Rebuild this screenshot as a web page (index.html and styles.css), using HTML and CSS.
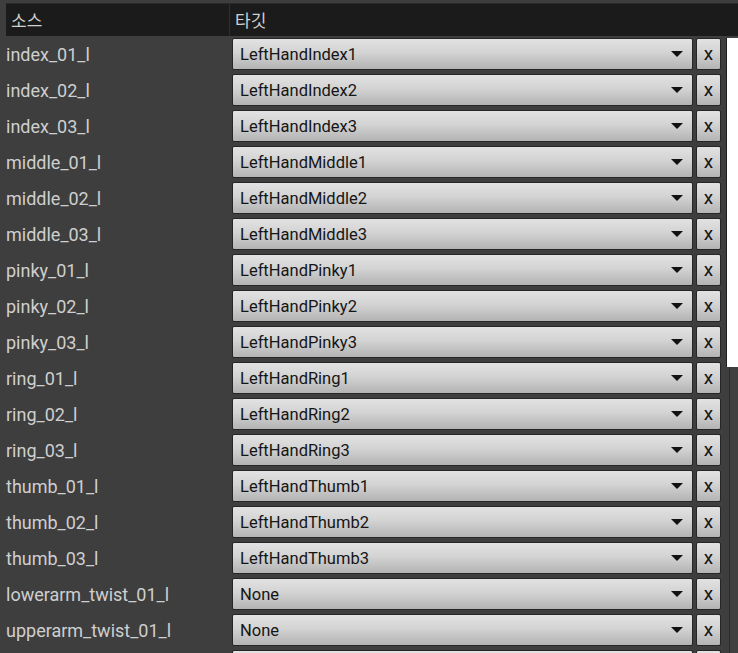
FILE: index.html
```html
<!DOCTYPE html>
<html lang="ko">
<head>
<meta charset="utf-8">
<link rel="stylesheet" href="styles.css">
</head>
<body>
<div class="header">
  <div class="hcell hsrc">소스</div>
  <div class="hcell htgt">타깃</div>
</div>
<div class="main">
  <div class="list" id="list">
    <div class="row"><div class="label">index_01_l</div><div class="combo"><span class="val">LeftHandIndex1</span><span class="arrow"></span></div><div class="xbtn">x</div></div>
    <div class="row"><div class="label">index_02_l</div><div class="combo"><span class="val">LeftHandIndex2</span><span class="arrow"></span></div><div class="xbtn">x</div></div>
    <div class="row"><div class="label">index_03_l</div><div class="combo"><span class="val">LeftHandIndex3</span><span class="arrow"></span></div><div class="xbtn">x</div></div>
    <div class="row"><div class="label">middle_01_l</div><div class="combo"><span class="val">LeftHandMiddle1</span><span class="arrow"></span></div><div class="xbtn">x</div></div>
    <div class="row"><div class="label">middle_02_l</div><div class="combo"><span class="val">LeftHandMiddle2</span><span class="arrow"></span></div><div class="xbtn">x</div></div>
    <div class="row"><div class="label">middle_03_l</div><div class="combo"><span class="val">LeftHandMiddle3</span><span class="arrow"></span></div><div class="xbtn">x</div></div>
    <div class="row"><div class="label">pinky_01_l</div><div class="combo"><span class="val">LeftHandPinky1</span><span class="arrow"></span></div><div class="xbtn">x</div></div>
    <div class="row"><div class="label">pinky_02_l</div><div class="combo"><span class="val">LeftHandPinky2</span><span class="arrow"></span></div><div class="xbtn">x</div></div>
    <div class="row"><div class="label">pinky_03_l</div><div class="combo"><span class="val">LeftHandPinky3</span><span class="arrow"></span></div><div class="xbtn">x</div></div>
    <div class="row"><div class="label">ring_01_l</div><div class="combo"><span class="val">LeftHandRing1</span><span class="arrow"></span></div><div class="xbtn">x</div></div>
    <div class="row"><div class="label">ring_02_l</div><div class="combo"><span class="val">LeftHandRing2</span><span class="arrow"></span></div><div class="xbtn">x</div></div>
    <div class="row"><div class="label">ring_03_l</div><div class="combo"><span class="val">LeftHandRing3</span><span class="arrow"></span></div><div class="xbtn">x</div></div>
    <div class="row"><div class="label">thumb_01_l</div><div class="combo"><span class="val">LeftHandThumb1</span><span class="arrow"></span></div><div class="xbtn">x</div></div>
    <div class="row"><div class="label">thumb_02_l</div><div class="combo"><span class="val">LeftHandThumb2</span><span class="arrow"></span></div><div class="xbtn">x</div></div>
    <div class="row"><div class="label">thumb_03_l</div><div class="combo"><span class="val">LeftHandThumb3</span><span class="arrow"></span></div><div class="xbtn">x</div></div>
    <div class="row"><div class="label">lowerarm_twist_01_l</div><div class="combo"><span class="val">None</span><span class="arrow"></span></div><div class="xbtn">x</div></div>
    <div class="row"><div class="label">upperarm_twist_01_l</div><div class="combo"><span class="val">None</span><span class="arrow"></span></div><div class="xbtn">x</div></div>
    <div class="row"><div class="label"></div><div class="combo"><span class="val"></span><span class="arrow"></span></div><div class="xbtn"></div></div>
  </div>
  <div class="scroll">
    <div class="thumb"></div>
    <div class="track"></div>
  </div>
</div>
</body>
</html>
```
FILE: styles.css
```css
html, body {
  margin: 0;
  padding: 0;
  height: 653px;
  overflow: hidden;
}
body {
  background: #3e3e3e;
  font-family: Roboto, "Noto Sans CJK KR", sans-serif;
}
.header {
  display: flex;
  margin: 3px 0 0 6px;
  height: 33px;
  background: #1b1b1b;
  border-top: 1px solid #2a2a2a;
  box-sizing: border-box;
}
.hcell {
  display: flex;
  align-items: center;
  color: #d0d0d0;
  font-family: "Noto Sans CJK KR", sans-serif;
  font-size: 17px;
  padding-left: 5px;
  padding-bottom: 2px;
}
.hsrc {
  width: 218px;
  border-right: 1px solid #2f2f2f;
}
.main {
  display: flex;
}
.list {
  width: 726px;
}
.row {
  display: flex;
  align-items: center;
  height: 36px;
}
.label {
  width: 227px;
  padding-left: 6px;
  box-sizing: border-box;
  color: #cfcfcf;
  font-size: 18px;
  padding-top: 1px;
}
.combo {
  margin-left: 5px;
  width: 461px;
  height: 32px;
  box-sizing: border-box;
  border: 1px solid #262626;
  border-radius: 2px;
  background: linear-gradient(#e2e2e2, #d3d3d3 45%, #b3b3b3);
  display: flex;
  align-items: center;
  padding: 0 8px 0 7px;
}
.val {
  flex: 1;
  color: #151515;
  font-size: 16.5px;
}
.arrow {
  width: 0;
  height: 0;
  border-left: 6px solid transparent;
  border-right: 6px solid transparent;
  border-top: 6px solid #111;
  margin-right: 1px;
}
.xbtn {
  margin-left: 3px;
  width: 25px;
  height: 32px;
  box-sizing: border-box;
  border: 1px solid #262626;
  border-radius: 2px;
  background: linear-gradient(#e2e2e2, #d3d3d3 45%, #b3b3b3);
  color: #111;
  font-size: 19px;
  display: flex;
  align-items: center;
  justify-content: center;
  padding-bottom: 1px;
}
.scroll {
  width: 12px;
  display: flex;
  flex-direction: column;
}
.thumb {
  margin-top: 2px;
  height: 329px;
  background: #ffffff;
  border-left: 1px solid #1e1e1e;
}
.track {
  flex: 1;
  border-left: 3px solid #3e3e3e;
  background: linear-gradient(90deg, #2c2c2c 0, #2c2c2c 1px, #404040 1px);
}
```
